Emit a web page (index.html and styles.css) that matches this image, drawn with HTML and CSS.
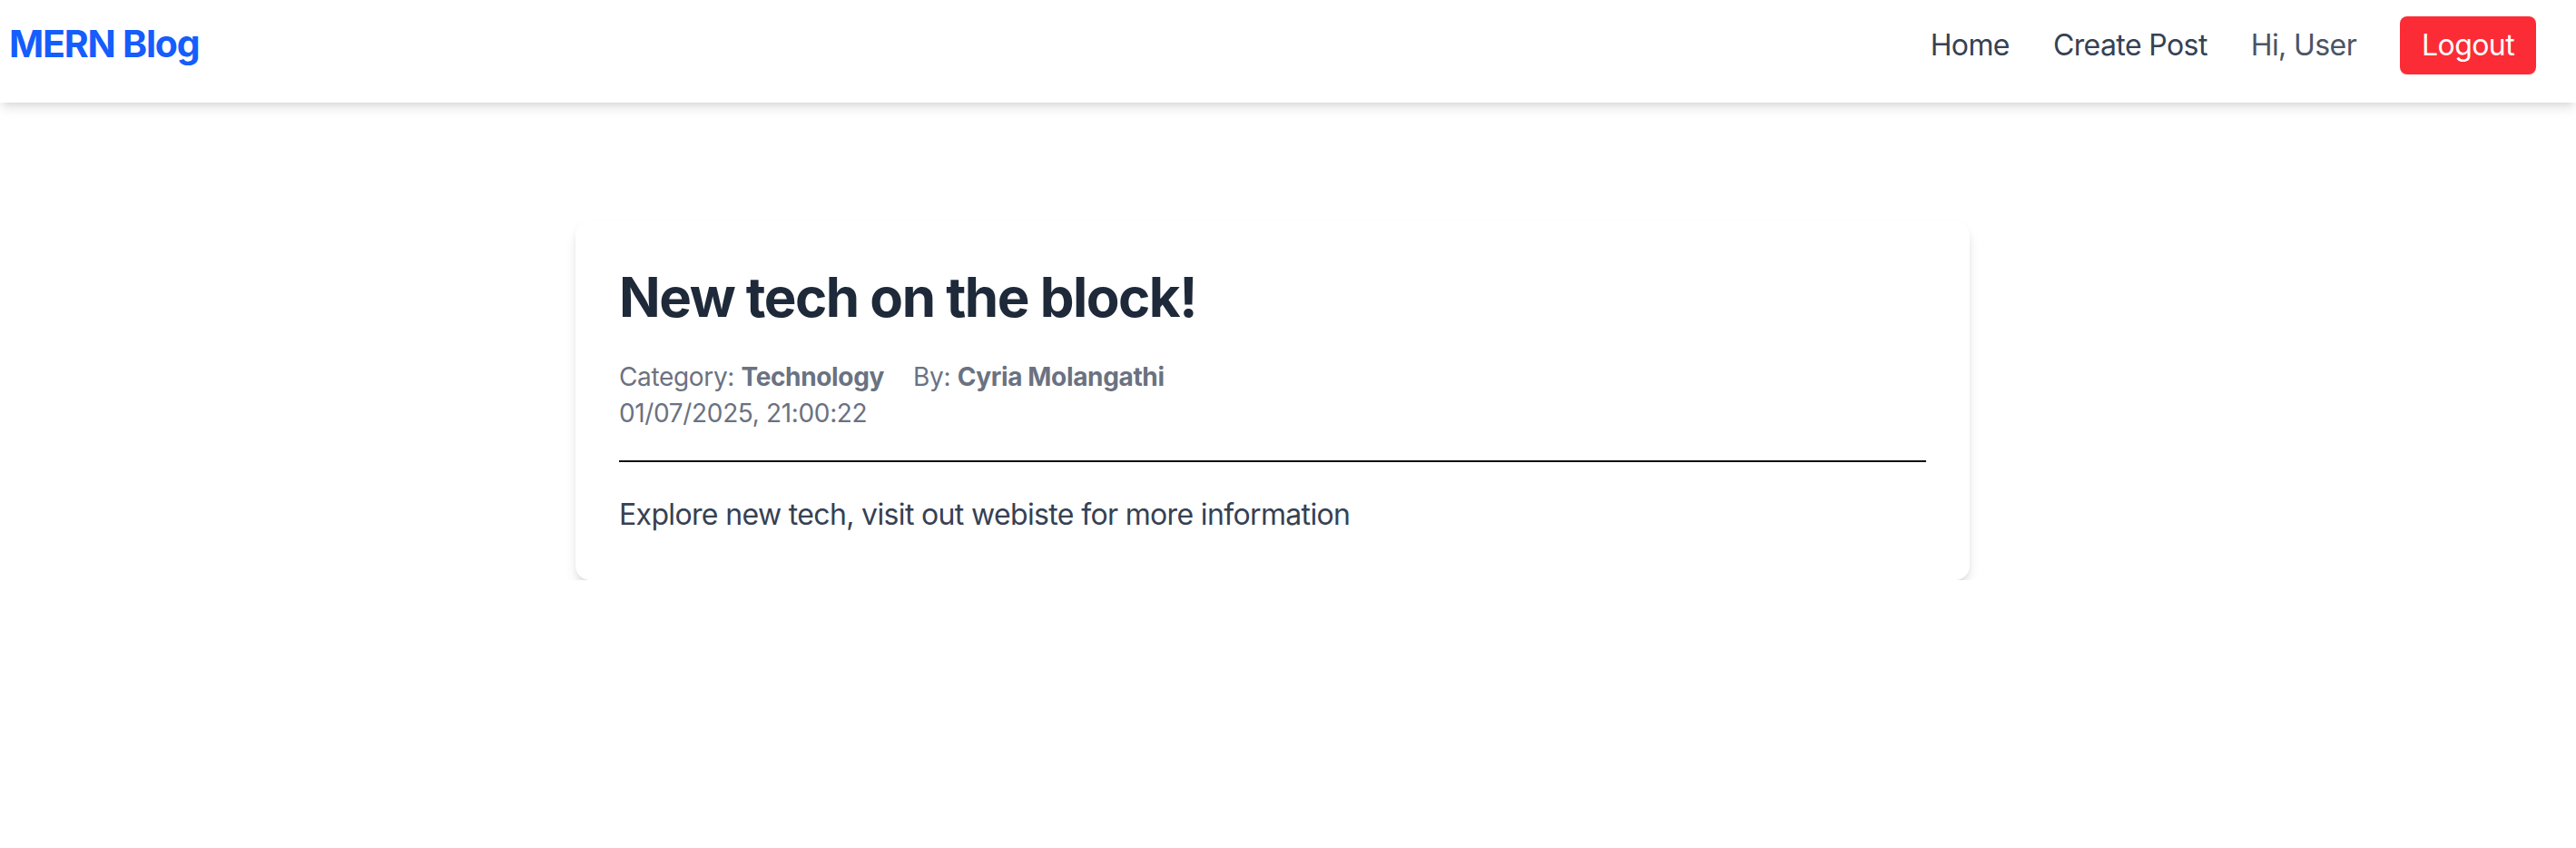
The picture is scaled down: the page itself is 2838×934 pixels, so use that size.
FILE: index.html
```html
<!DOCTYPE html>
<html lang="en">
<head>
<meta charset="utf-8">
<title>MERN Blog</title>
<link rel="stylesheet" href="styles.css">
</head>
<body>
<header class="topbar">
  <a class="logo" href="#">MERN Blog</a>
  <nav class="nav">
    <a class="nav-link" href="#">Home</a>
    <a class="nav-link" href="#">Create Post</a>
    <span class="greeting">Hi, User</span>
    <button class="logout" type="button">Logout</button>
  </nav>
</header>
<main class="main">
  <article class="card">
    <h1 class="title">New tech on the block!</h1>
    <div class="meta">
      <div class="meta-row">
        <span class="meta-item">Category: <strong>Technology</strong></span>
        <span class="meta-item">By: <strong>Cyria Molangathi</strong></span>
      </div>
      <div class="meta-date">01/07/2025, 21:00:22</div>
    </div>
    <hr class="divider">
    <p class="body">Explore new tech, visit out webiste for more information</p>
  </article>
</main>
</body>
</html>
```
FILE: styles.css
```css
* { box-sizing: border-box; }
html, body { margin: 0; padding: 0; background: #ffffff; }
body {
  font-family: Inter, "Noto Sans", "Liberation Sans", sans-serif;
  color: #000;
}
.topbar {
  height: 113px;
  display: flex;
  align-items: center;
  justify-content: space-between;
  padding: 18px 44px 31px 10px;
  background: #fff;
  box-shadow: 0 8px 12px -2px rgba(0,0,0,0.1), 0 4px 8px -4px rgba(0,0,0,0.1);
  position: relative;
}
.logo {
  font-size: 41px;
  font-weight: 700;
  line-height: 64px;
  color: #155dfc;
  text-decoration: none;
  letter-spacing: -1.2px;
  padding-bottom: 4px;
}
.nav {
  display: flex;
  align-items: center;
  gap: 48px;
}
.nav-link, .greeting {
  font-size: 32px;
  line-height: 48px;
  color: #364153;
  text-decoration: none;
  letter-spacing: -0.6px;
}
.greeting { color: #4a5565; }
.logout {
  font-family: inherit;
  font-size: 32px;
  line-height: 48px;
  height: 64px;
  padding: 0 24px;
  border: 0;
  border-radius: 8px;
  background: #fb2c36;
  color: #fff;
  letter-spacing: -0.6px;
}
.main {
  padding-top: 130px;
  padding-left: 634px;
}
.card {
  width: 1536px;
  background: #fff;
  border-radius: 16px;
  padding: 48px;
  box-shadow: 0 8px 14px -2px rgba(0,0,0,0.12), 0 4px 8px -4px rgba(0,0,0,0.12);
}
.title {
  margin: 0 0 32px;
  font-size: 60px;
  line-height: 72px;
  font-weight: 700;
  color: #1e2939;
  letter-spacing: -1.5px;
}
.meta {
  font-size: 28px;
  line-height: 40px;
  color: #6a7282;
  letter-spacing: -0.35px;
}
.meta-row {
  display: flex;
  gap: 32px;
}
.meta strong { font-weight: 700; }
.divider {
  margin: 32px 0 34px;
  border: 0;
  border-top: 2px solid #111;
}
.body {
  margin: 0;
  font-size: 32px;
  line-height: 48px;
  color: #364153;
  letter-spacing: -0.65px;
}
```
